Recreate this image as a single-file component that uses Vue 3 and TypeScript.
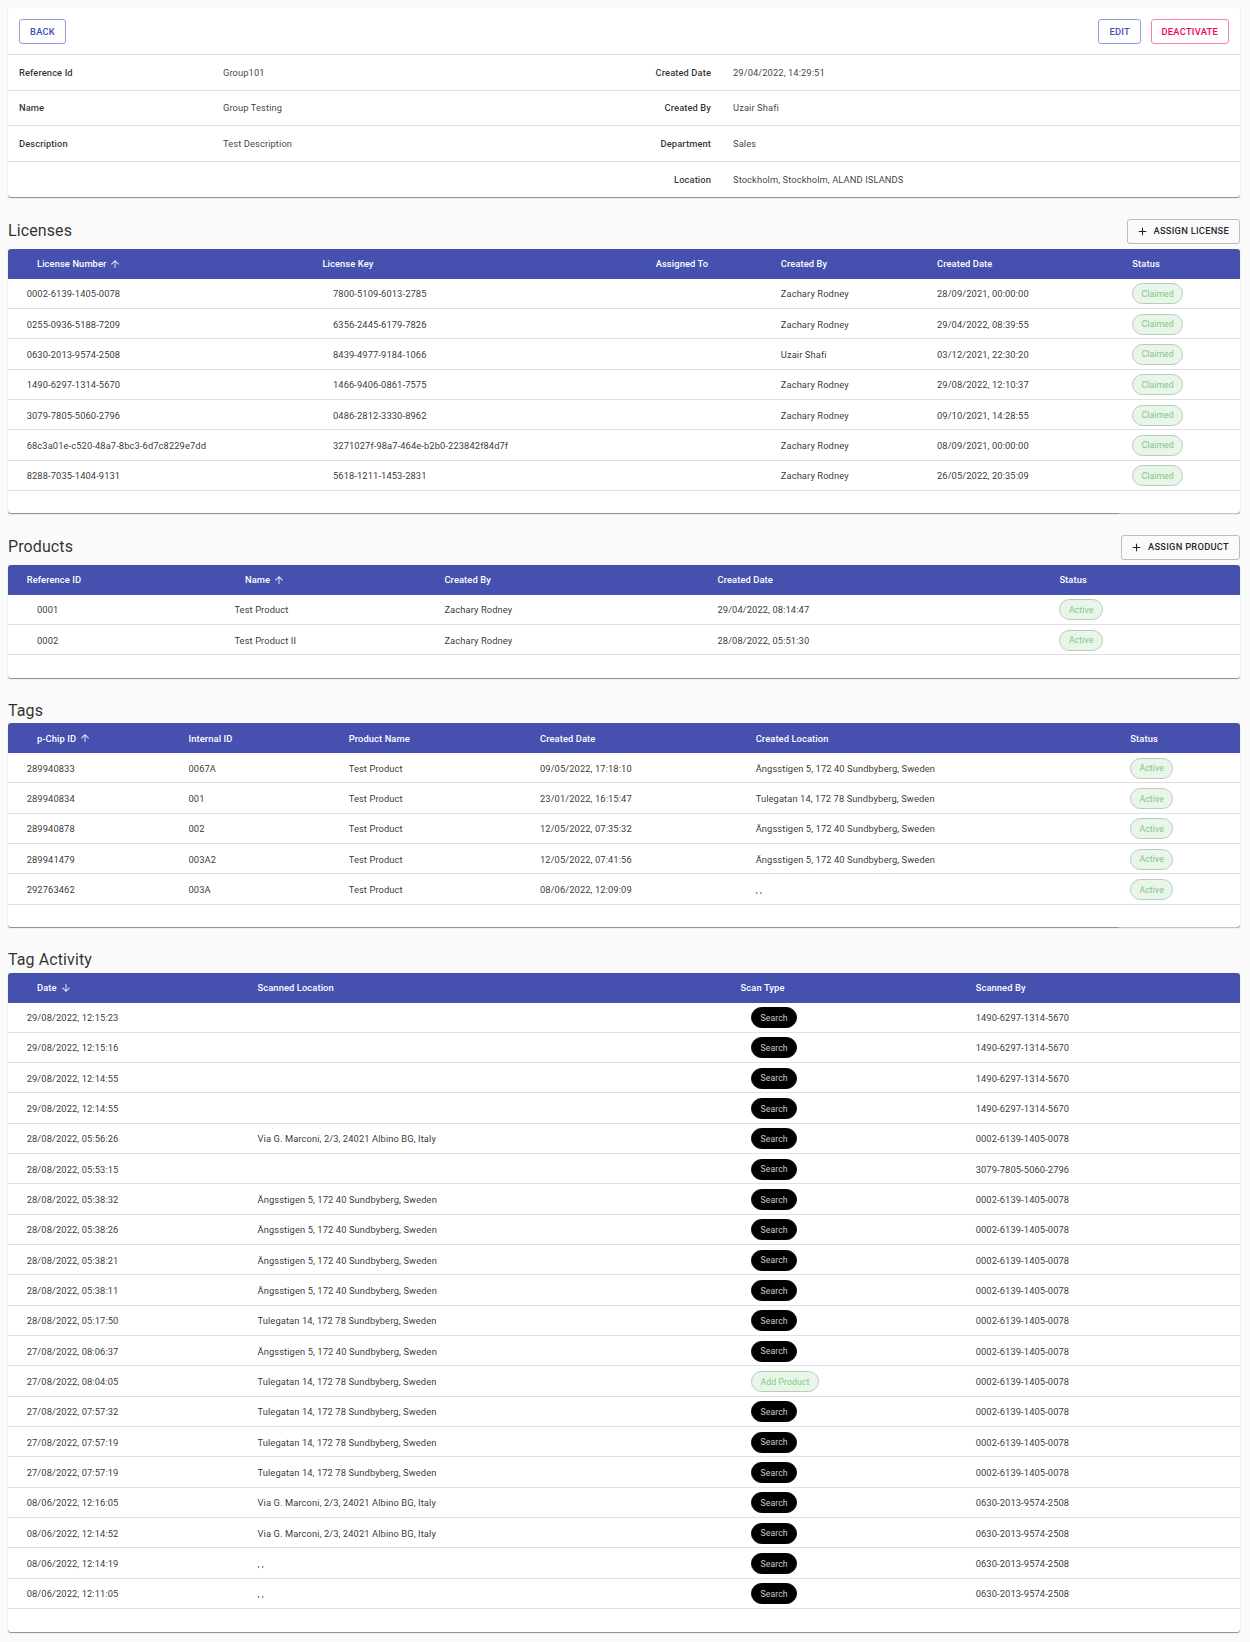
<script setup lang="ts">
interface Column {
  label: string;
  headX: number;
  cellX: number;
  chip?: boolean;
  sort?: "up" | "down";
}

interface Section {
  title: string;
  action?: string;
  shortLine?: boolean;
  columns: Column[];
  rows: string[][];
}

const TABLE_LEFT = 8;

const details = [
  ["Reference Id", "Group101", "Created Date", "29/04/2022, 14:29:51"],
  ["Name", "Group Testing", "Created By", "Uzair Shafi"],
  ["Description", "Test Description", "Department", "Sales"],
  ["", "", "Location", "Stockholm, Stockholm, ALAND ISLANDS"],
];

const ang = "Ängsstigen 5, 172 40 Sundbyberg, Sweden";
const tule = "Tulegatan 14, 172 78 Sundbyberg, Sweden";
const via = "Via G. Marconi, 2/3, 24021 Albino BG, Italy";
const l1 = "1490-6297-1314-5670";
const l2 = "0002-6139-1405-0078";
const l3 = "0630-2013-9574-2508";

const sections: Section[] = [
  {
    title: "Licenses",
    action: "Assign License",
    shortLine: true,
    columns: [
      { label: "License Number", headX: 37, cellX: 26.7, sort: "up" },
      { label: "License Key", headX: 322.4, cellX: 333 },
      { label: "Assigned To", headX: 655.7, cellX: 655.7 },
      { label: "Created By", headX: 780.8, cellX: 780.8 },
      { label: "Created Date", headX: 937, cellX: 937 },
      { label: "Status", headX: 1132.4, cellX: 1132, chip: true },
    ],
    rows: [
      ["0002-6139-1405-0078", "7800-5109-6013-2785", "", "Zachary Rodney", "28/09/2021, 00:00:00", "Claimed"],
      ["0255-0936-5188-7209", "6356-2445-6179-7826", "", "Zachary Rodney", "29/04/2022, 08:39:55", "Claimed"],
      ["0630-2013-9574-2508", "8439-4977-9184-1066", "", "Uzair Shafi", "03/12/2021, 22:30:20", "Claimed"],
      ["1490-6297-1314-5670", "1466-9406-0861-7575", "", "Zachary Rodney", "29/08/2022, 12:10:37", "Claimed"],
      ["3079-7805-5060-2796", "0486-2812-3330-8962", "", "Zachary Rodney", "09/10/2021, 14:28:55", "Claimed"],
      ["68c3a01e-c520-48a7-8bc3-6d7c8229e7dd", "3271027f-98a7-464e-b2b0-223842f84d7f", "", "Zachary Rodney", "08/09/2021, 00:00:00", "Claimed"],
      ["8288-7035-1404-9131", "5618-1211-1453-2831", "", "Zachary Rodney", "26/05/2022, 20:35:09", "Claimed"],
    ],
  },
  {
    title: "Products",
    action: "Assign Product",
    columns: [
      { label: "Reference ID", headX: 26.7, cellX: 37 },
      { label: "Name", headX: 245, cellX: 234.4, sort: "up" },
      { label: "Created By", headX: 444.4, cellX: 444.4 },
      { label: "Created Date", headX: 717.5, cellX: 717.5 },
      { label: "Status", headX: 1059.4, cellX: 1059.4, chip: true },
    ],
    rows: [
      ["0001", "Test Product", "Zachary Rodney", "29/04/2022, 08:14:47", "Active"],
      ["0002", "Test Product II", "Zachary Rodney", "28/08/2022, 05:51:30", "Active"],
    ],
  },
  {
    title: "Tags",
    shortLine: true,
    columns: [
      { label: "p-Chip ID", headX: 37, cellX: 26.7, sort: "up" },
      { label: "Internal ID", headX: 188.5, cellX: 188.5 },
      { label: "Product Name", headX: 348.7, cellX: 348.7 },
      { label: "Created Date", headX: 540, cellX: 540 },
      { label: "Created Location", headX: 755.7, cellX: 755.7 },
      { label: "Status", headX: 1130.4, cellX: 1130, chip: true },
    ],
    rows: [
      ["289940833", "0067A", "Test Product", "09/05/2022, 17:18:10", ang, "Active"],
      ["289940834", "001", "Test Product", "23/01/2022, 16:15:47", tule, "Active"],
      ["289940878", "002", "Test Product", "12/05/2022, 07:35:32", ang, "Active"],
      ["289941479", "003A2", "Test Product", "12/05/2022, 07:41:56", ang, "Active"],
      ["292763462", "003A", "Test Product", "08/06/2022, 12:09:09", ", ,", "Active"],
    ],
  },
  {
    title: "Tag Activity",
    columns: [
      { label: "Date", headX: 37, cellX: 26.7, sort: "down" },
      { label: "Scanned Location", headX: 257.5, cellX: 257.5 },
      { label: "Scan Type", headX: 740.6, cellX: 751, chip: true },
      { label: "Scanned By", headX: 975.7, cellX: 975.7 },
    ],
    rows: [
      ["29/08/2022, 12:15:23", "", "Search", l1],
      ["29/08/2022, 12:15:16", "", "Search", l1],
      ["29/08/2022, 12:14:55", "", "Search", l1],
      ["29/08/2022, 12:14:55", "", "Search", l1],
      ["28/08/2022, 05:56:26", via, "Search", l2],
      ["28/08/2022, 05:53:15", "", "Search", "3079-7805-5060-2796"],
      ["28/08/2022, 05:38:32", ang, "Search", l2],
      ["28/08/2022, 05:38:26", ang, "Search", l2],
      ["28/08/2022, 05:38:21", ang, "Search", l2],
      ["28/08/2022, 05:38:11", ang, "Search", l2],
      ["28/08/2022, 05:17:50", tule, "Search", l2],
      ["27/08/2022, 08:06:37", ang, "Search", l2],
      ["27/08/2022, 08:04:05", tule, "Add Product", l2],
      ["27/08/2022, 07:57:32", tule, "Search", l2],
      ["27/08/2022, 07:57:19", tule, "Search", l2],
      ["27/08/2022, 07:57:19", tule, "Search", l2],
      ["08/06/2022, 12:16:05", via, "Search", l3],
      ["08/06/2022, 12:14:52", via, "Search", l3],
      ["08/06/2022, 12:14:19", ", ,", "Search", l3],
      ["08/06/2022, 12:11:05", ", ,", "Search", l3],
    ],
  },
];

// Column starts come from the leftmost text in each column
const colStart = (c: Column) => Math.min(c.headX, c.cellX);

const gridColumns = (columns: Column[]) => {
  const widths = columns.map((c, i) => {
    const start = i === 0 ? TABLE_LEFT : colStart(c);
    return i < columns.length - 1 ? `${colStart(columns[i + 1]) - start}px` : "1fr";
  });
  return widths.join(" ");
};

const pad = (x: number, c: Column, i: number) => {
  const start = i === 0 ? TABLE_LEFT : colStart(c);
  return `${x - start}px`;
};
</script>

<template>
  <div class="page">
    <div class="card">
      <div class="toolbar">
        <button class="btn primary" type="button">Back</button>
        <div class="toolbar-right">
          <button class="btn primary" type="button">Edit</button>
          <button class="btn danger" type="button">Deactivate</button>
        </div>
      </div>
      <div v-for="(row, i) in details" :key="i" class="detail-row">
        <span class="detail-label">{{ row[0] }}</span>
        <span class="detail-value">{{ row[1] }}</span>
        <span class="detail-label right">{{ row[2] }}</span>
        <span class="detail-value">{{ row[3] }}</span>
      </div>
    </div>

    <section v-for="s in sections" :key="s.title" class="section">
      <div :class="['section-head', { 'has-action': s.action }]">
        <h2 class="section-title">{{ s.title }}</h2>
        <button v-if="s.action" class="btn plain" type="button">
          <svg class="plus" viewBox="0 0 24 24"><path d="M19 13h-6v6h-2v-6H5v-2h6V5h2v6h6v2z" /></svg>
          {{ s.action }}
        </button>
      </div>
      <div :class="['card', { 'short-line': s.shortLine }]">
        <div class="table-head" :style="{ gridTemplateColumns: gridColumns(s.columns) }">
          <div
            v-for="(c, i) in s.columns"
            :key="c.label"
            class="head-cell"
            :style="{ paddingLeft: pad(c.headX, c, i) }"
          >
            {{ c.label }}
            <svg v-if="c.sort" class="sort" viewBox="0 0 24 24">
              <path v-if="c.sort === 'up'" d="M4 12l1.41 1.41L11 7.83V20h2V7.83l5.58 5.59L20 12l-8-8-8 8z" />
              <path v-else d="M20 12l-1.41-1.41L13 16.17V4h-2v12.17l-5.58-5.59L4 12l8 8 8-8z" />
            </svg>
          </div>
        </div>
        <div
          v-for="(row, r) in s.rows"
          :key="r"
          class="table-row"
          :style="{ gridTemplateColumns: gridColumns(s.columns) }"
        >
          <div
            v-for="(c, i) in s.columns"
            :key="c.label"
            class="cell"
            :style="{ paddingLeft: pad(c.cellX, c, i) }"
          >
            <span v-if="c.chip" :class="['chip', { dark: row[i] === 'Search' }]">{{ row[i] }}</span>
            <template v-else>{{ row[i] }}</template>
          </div>
        </div>
        <div class="table-foot"></div>
      </div>
    </section>
  </div>
</template>

<style>
html,
body {
  background: #fafafa;
}
</style>

<style scoped>
.page {
  box-sizing: border-box;
  width: 1250px;
  min-height: 1642px;
  padding: 8px 10px 9px 8px;
  background: #fafafa;
  font-family: Roboto, "Liberation Sans", sans-serif;
  font-size: 9.33px;
  letter-spacing: 0.1px;
  color: rgba(0, 0, 0, 0.82);
}
.card {
  position: relative;
  background: #fff;
  border-radius: 3px;
  box-shadow: 0 1px 1px rgba(0, 0, 0, 0.45), 0 0 1px rgba(0, 0, 0, 0.06);
}
/* the dark bottom edge stops short under the status column */
.card.short-line::after {
  content: "";
  position: absolute;
  right: 3px;
  bottom: -1px;
  width: 118px;
  height: 1px;
  background: rgba(255, 255, 255, 0.45);
}
.toolbar {
  box-sizing: border-box;
  height: 47px;
  padding: 11px 11.5px 0 11px;
  display: flex;
  justify-content: space-between;
  align-items: flex-start;
  border-bottom: 1px solid #e0e0e0;
}
.toolbar-right {
  display: flex;
  gap: 10px;
}
.btn {
  box-sizing: border-box;
  height: 25px;
  padding: 0 10px;
  display: inline-flex;
  align-items: center;
  background: transparent;
  border: 1px solid;
  border-radius: 3px;
  font-family: inherit;
  font-size: 9.33px;
  font-weight: 500;
  letter-spacing: 0.25px;
  line-height: 22px;
  text-transform: uppercase;
}
.btn.primary {
  color: #3f51b5;
  border-color: rgba(63, 81, 181, 0.55);
}
.btn.danger {
  padding: 0 9.5px;
  color: #f50057;
  border-color: rgba(245, 0, 87, 0.5);
}
.btn.plain {
  padding-left: 8px;
  color: rgba(0, 0, 0, 0.87);
  border-color: rgba(0, 0, 0, 0.25);
}
.detail-row {
  box-sizing: border-box;
  height: 35.6px;
  display: grid;
  grid-template-columns: 215px 403px 85px 1fr;
  align-items: center;
  border-bottom: 1px solid #e0e0e0;
}
.detail-row:last-child {
  border-bottom: 0;
}
.detail-label {
  padding-left: 11px;
  font-weight: 500;
}
.detail-label.right {
  padding: 0;
  text-align: right;
}
.detail-value {
  color: rgba(0, 0, 0, 0.78);
}
.detail-value:last-child {
  padding-left: 22px;
}
.section {
  margin-top: 20.5px;
}
.section-head {
  min-height: 25px;
  display: flex;
  justify-content: space-between;
  align-items: center;
}
.section-head.has-action {
  padding: 1px 0 5px;
}
.section-title {
  margin: 0 0 1px;
  font-size: 16px;
  font-weight: 400;
  letter-spacing: 0.1px;
}
.plus {
  width: 13px;
  height: 13px;
  margin-right: 5px;
  fill: rgba(0, 0, 0, 0.87);
}
.table-head {
  height: 29.7px;
  display: grid;
  background: #4550af;
  border-radius: 3px 3px 0 0;
  color: #fff;
  font-weight: 500;
}
.head-cell {
  display: flex;
  align-items: center;
  white-space: nowrap;
}
.sort {
  width: 12px;
  height: 12px;
  margin-left: 3px;
  fill: rgba(255, 255, 255, 0.85);
}
.table-row {
  box-sizing: border-box;
  height: 30.33px;
  display: grid;
  border-bottom: 1px solid #e0e0e0;
}
.cell {
  box-sizing: border-box;
  padding-top: 1px;
  display: flex;
  align-items: center;
  white-space: nowrap;
}
.table-foot {
  height: 22.6px;
}
.chip {
  box-sizing: border-box;
  height: 21px;
  padding: 0 8.5px;
  display: inline-flex;
  align-items: center;
  background: #e8f5e9;
  border: 1px solid #bdc9bd;
  border-radius: 11px;
  font-size: 8.67px;
  color: #81c784;
}
.chip.dark {
  background: #000;
  border-color: #000;
  color: rgba(255, 255, 255, 0.8);
}
</style>
